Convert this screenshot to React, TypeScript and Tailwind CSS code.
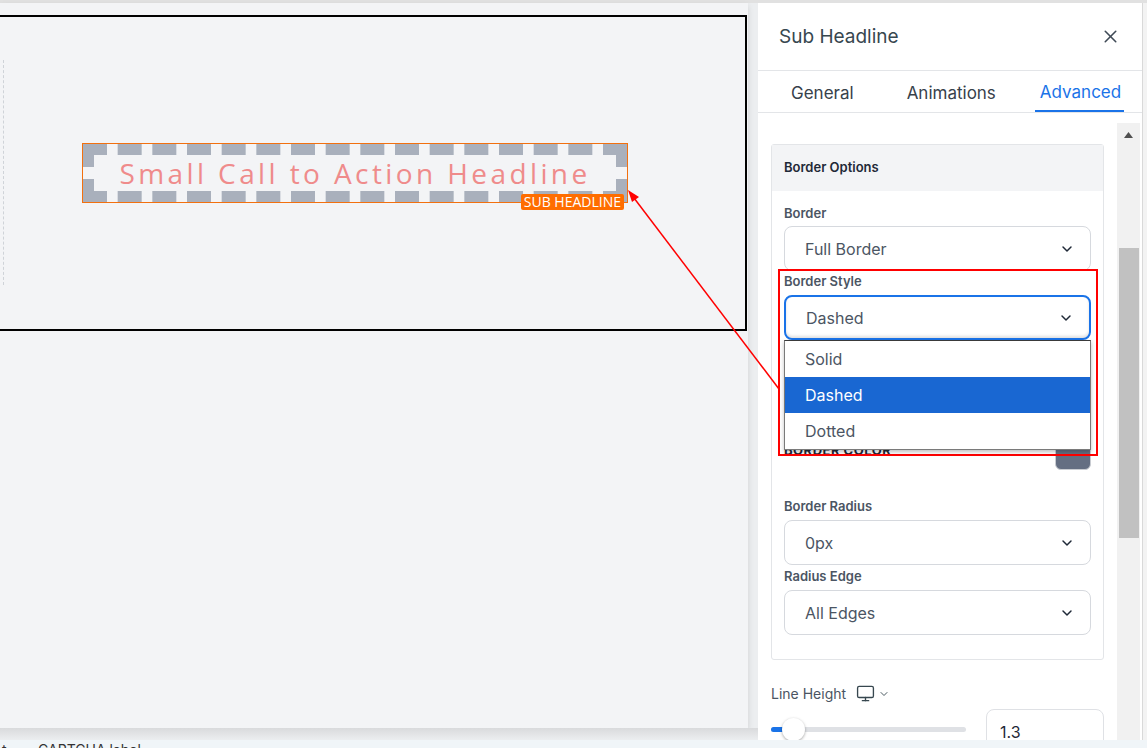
import React from 'react';
import { ChevronDown, Monitor, X } from 'lucide-react';

// dashed frame of the selected headline: 16 dashes along top/bottom, 2 per side
const DASH_W = 24;
const FRAME_W = 544;
const FRAME_H = 58;
const BAND = 11;
const hDashes = Array.from({ length: 16 }, (_, i) => (i * (FRAME_W - DASH_W)) / 15);

const DashedFrame: React.FC = () => (
  <svg className="absolute left-0 top-0" width={FRAME_W} height={FRAME_H}>
    <g fill="#a9b0bc">
      {hDashes.map((x) => (
        <React.Fragment key={x}>
          <rect x={x} y={0} width={DASH_W} height={BAND} />
          <rect x={x} y={FRAME_H - BAND} width={DASH_W} height={BAND} />
        </React.Fragment>
      ))}
      <rect x={0} y={0} width={BAND} height={23} />
      <rect x={0} y={35} width={BAND} height={23} />
      <rect x={FRAME_W - BAND} y={0} width={BAND} height={23} />
      <rect x={FRAME_W - BAND} y={35} width={BAND} height={23} />
    </g>
  </svg>
);

const SelectBox: React.FC<{ value: string; focused?: boolean }> = ({ value, focused }) => (
  <div
    className={`flex h-[45px] items-center justify-between rounded-lg bg-white pl-[20px] pr-[15px] text-[16px] text-[#4b5563] ${
      focused ? 'border-2 border-[#1a73e8] shadow-[inset_0_-2px_3px_rgba(0,0,0,0.12)]' : 'border border-[#d6d9de]'
    }`}
  >
    <span>{value}</span>
    <ChevronDown size={16} strokeWidth={2.2} className="text-[#1f2937]" />
  </div>
);

const FieldLabel: React.FC<{ children: React.ReactNode }> = ({ children }) => (
  <div className="text-[13px] font-semibold leading-[18px] text-[#4b5563]">{children}</div>
);

const BuilderCanvas: React.FC = () => (
  <div className="flex w-[758px] flex-col bg-[#eceef0]">
    <div className="h-[725px] w-[748px] overflow-hidden bg-[#f3f4f6] pt-[12px] shadow-[0_3px_6px_rgba(0,0,0,0.12)]">
      <div className="-ml-[10px] flex h-[316px] w-[757px] border-2 border-black">
        <div className="ml-[11px] mt-[43px] h-[225px] border-l border-dashed border-[#cfd3d8]" />
        <div className="relative ml-[78px] mt-[126px] h-[60px] w-[546px] border border-[#f2700f]">
          <div className="relative flex h-full w-full items-center justify-center">
            <DashedFrame />
            <span
              className="relative text-[28px] tracking-[3.4px] text-[#ef8b8b]"
              style={{ fontFamily: '"Open Sans", sans-serif' }}
            >
              Small Call to Action Headline
            </span>
          </div>
          <div
            className="absolute -bottom-[8px] right-[3px] flex h-[16px] items-center rounded-[2px] bg-[#ff6d00] px-[3px] text-[14px] leading-none text-white"
            style={{ fontFamily: '"Open Sans", sans-serif' }}
          >
            SUB HEADLINE
          </div>
        </div>
      </div>
    </div>
    <div className="flex-1 bg-gradient-to-b from-[#d9dadc] to-[#eceef0]" />
  </div>
);

const SettingsPanel: React.FC = () => (
  <div className="flex w-[384px] flex-col bg-white">
    <div className="flex h-[68px] items-center justify-between border-b border-[#e3e5e8] pl-[21px] pr-[21px] pt-[2px]">
      <span className="text-[19px] text-[#37474f]">Sub Headline</span>
      <X size={21} strokeWidth={1.8} className="-mt-[3px] text-[#3f4a56]" />
    </div>
    <div className="flex h-[42px] items-stretch border-b border-[#e3e5e8] text-[17px] text-[#37414b]">
      <div className="ml-[33px] flex items-center pt-[5px]">General</div>
      <div className="ml-[53px] flex items-center pt-[5px]">Animations</div>
      <div className="ml-[39px] flex items-center border-b-2 border-[#1a73e8] pl-[5px] pr-[3px] pt-[5px] text-[#1a73e8]">Advanced</div>
    </div>

    <div className="flex flex-1 overflow-hidden">
      <div className="w-[359px] px-[13px] pt-[31px]">
        <div className="rounded-[3px] border border-[#e3e5e8]">
          <div className="flex h-[46px] items-center bg-[#f3f4f6] px-[12px] text-[13px] font-semibold text-[#1f2937]">
            Border Options
          </div>
          <div className="px-[12px] pb-[24px] pt-[13px]">
            <FieldLabel>Border</FieldLabel>
            <div className="mt-[4px]">
              <SelectBox value="Full Border" />
            </div>
            <div className="mt-[1px]">
              <FieldLabel>Border Style</FieldLabel>
            </div>
            <div className="relative mt-[5px]">
              <SelectBox value="Dashed" focused />
              <div className="absolute left-0 right-0 top-[45px] z-10 border border-[#7a7a7a] border-t-[#3a3a3a] bg-white text-[16px] text-[#4b5563] shadow-[0_2px_4px_rgba(0,0,0,0.25)]">
                <div className="flex h-[36px] items-center pl-[20px]">Solid</div>
                <div className="flex h-[36px] items-center bg-[#1967d2] pl-[20px] text-white">Dashed</div>
                <div className="flex h-[36px] items-center pl-[20px]">Dotted</div>
              </div>
            </div>
            <div className="mt-[92px] flex items-center justify-between">
              <span className="text-[13px] font-bold tracking-[0.5px] text-[#1f2937]">BORDER COLOR</span>
              <div className="h-[38px] w-[36px] rounded-md border border-[#c9ccd2] bg-[#646e82]" />
            </div>
            <div className="mt-[27px]">
              <FieldLabel>Border Radius</FieldLabel>
            </div>
            <div className="mt-[5px]">
              <SelectBox value="0px" />
            </div>
            <div className="mt-[2px]">
              <FieldLabel>Radius Edge</FieldLabel>
            </div>
            <div className="mt-[5px]">
              <SelectBox value="All Edges" />
            </div>
          </div>
        </div>

        <div className="mt-[23px] flex items-center gap-[10px] text-[14px] text-[#4b5563]">
          <span>Line Height</span>
          <div className="flex items-center gap-[3px] text-[#37474f]">
            <Monitor size={19} strokeWidth={1.7} />
            <ChevronDown size={12} strokeWidth={1.8} />
          </div>
        </div>
        <div className="mt-[5px] flex items-start justify-between">
          <div className="relative mt-[18px] h-[5px] w-[195px] rounded-full bg-[#dfe1e5]">
            <div className="h-full w-[22px] rounded-full bg-[#1a73e8]" />
            <div className="absolute -top-[9px] left-[11px] h-[23px] w-[23px] rounded-full bg-white shadow-[0_1px_3px_rgba(0,0,0,0.35)]" />
          </div>
          <div className="flex h-[45px] w-[118px] items-center rounded-lg border border-[#dfe1e5] pl-[13px] text-[16px] text-[#1f2937]">
            1.3
          </div>
        </div>
      </div>

      <div className="mt-[10px] flex w-[23px] flex-col items-center bg-[#f1f1f1]">
        <svg width="9" height="6" viewBox="0 0 9 6" className="mt-[9px]">
          <path d="M4.5 0 L9 6 L0 6 Z" fill="#505050" />
        </svg>
        <div className="mt-[110px] h-[290px] w-[20px] bg-[#c1c1c1]" />
      </div>
      <div className="w-[2px]" />
    </div>
  </div>
);

export default function App() {
  return (
    <div className="relative flex h-[748px] w-[1147px] flex-col overflow-hidden bg-[#f3f4f6]" style={{ fontFamily: 'Inter, "Noto Sans", sans-serif' }}>
      <div className="h-[3px] bg-[#e1e1e1]" />
      <div className="flex h-[737px]">
        <BuilderCanvas />
        <SettingsPanel />
        <div className="w-[5px] border-l border-[#d9d9d9] bg-[#f3f3f3]" />
      </div>
      <div className="h-[8px] overflow-hidden bg-[#f0f5f8] pl-[2px] pt-[1px] text-[14px] leading-[18px] text-[#333]">
        t&nbsp;&nbsp;&nbsp;&nbsp;&nbsp;&nbsp;&nbsp;&nbsp;CAPTCHA label
      </div>

      {/* annotation overlays */}
      <div className="pointer-events-none absolute left-[778px] top-[269px] h-[187px] w-[320px] border-2 border-[#ff0000]" />
      <svg className="pointer-events-none absolute left-0 top-0" width="1147" height="748">
        <line x1="779" y1="389" x2="634" y2="198" stroke="#ff0000" strokeWidth="1.5" />
        <path d="M628 190 L639 197 L632 202 Z" fill="#ff0000" />
      </svg>
    </div>
  );
}
